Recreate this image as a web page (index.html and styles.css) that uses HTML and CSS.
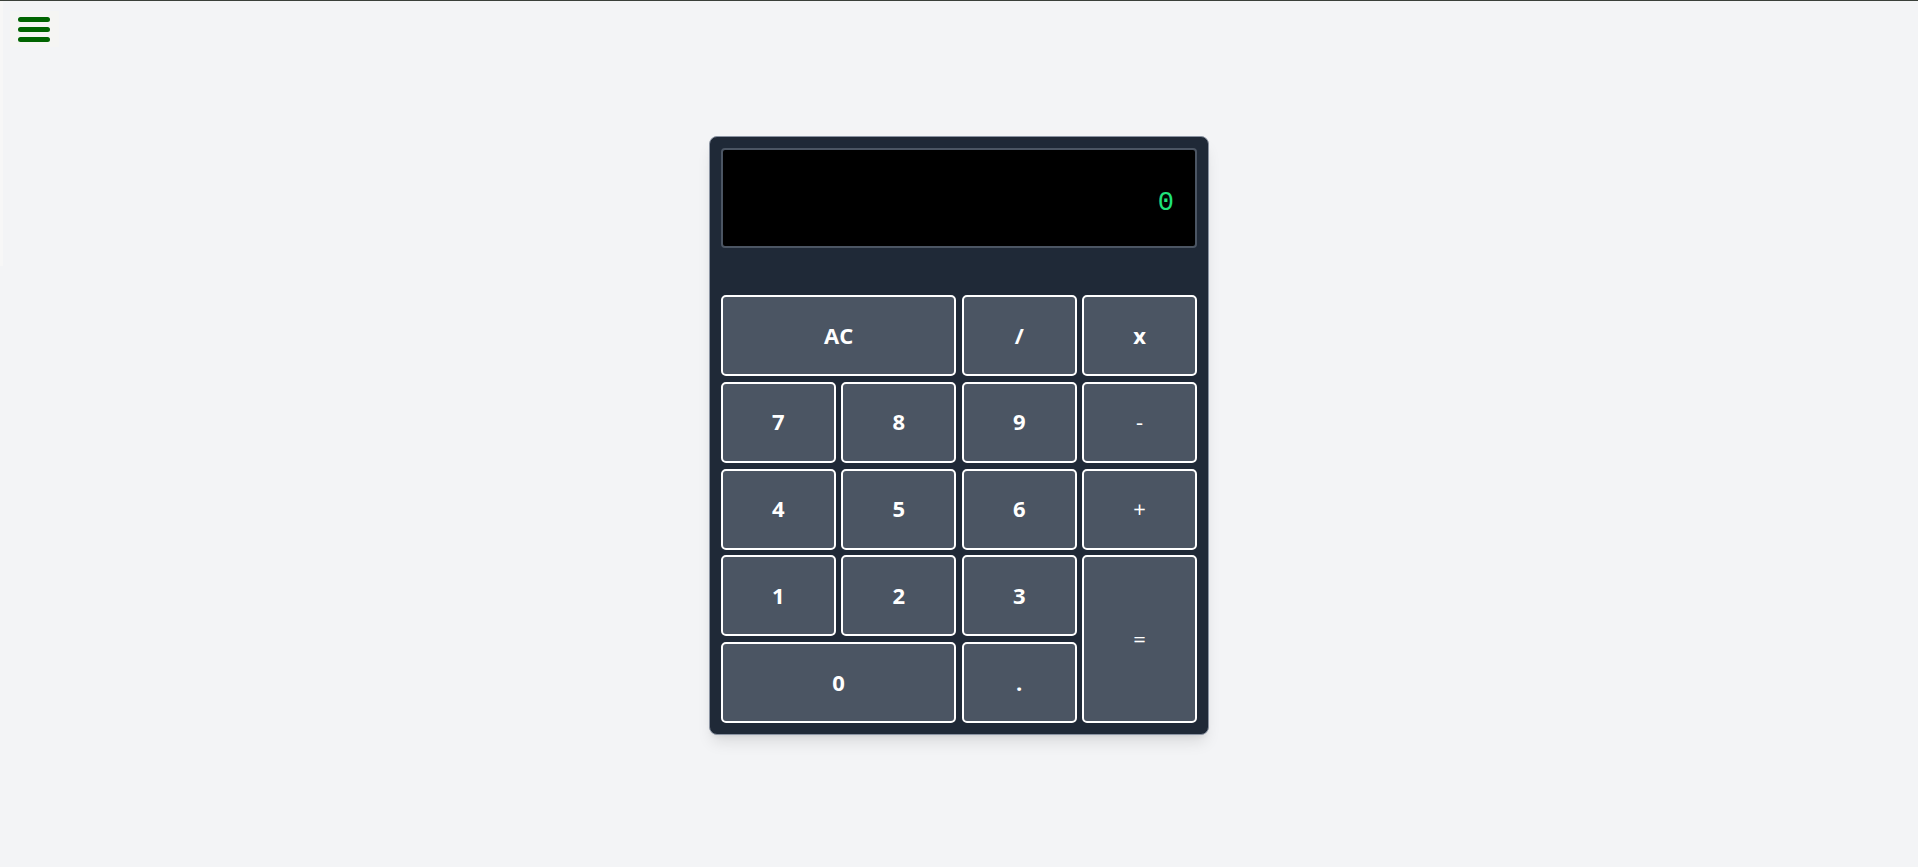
FILE: index.html
```html
<!DOCTYPE html>
<html lang="en">
<head>
<meta charset="utf-8">
<title>Calculator</title>
<link rel="stylesheet" href="styles.css">
</head>
<body>
<aside class="sidebar-edge"></aside>
<header class="topbar">
  <button class="menu-btn" aria-label="Menu">
    <svg width="32" height="25" viewBox="0 0 32 25">
      <rect x="0" y="0" width="32" height="5" rx="2.5" fill="#006400"/>
      <rect x="0" y="10" width="32" height="5" rx="2.5" fill="#006400"/>
      <rect x="0" y="20" width="32" height="5" rx="2.5" fill="#006400"/>
    </svg>
  </button>
</header>
<main class="stage">
  <div class="calculator">
    <div class="display"><span class="display-value">0</span></div>
    <div class="keys">
      <button class="key span-2">AC</button>
      <button class="key">/</button>
      <button class="key">x</button>
      <button class="key">7</button>
      <button class="key">8</button>
      <button class="key">9</button>
      <button class="key light">-</button>
      <button class="key">4</button>
      <button class="key">5</button>
      <button class="key">6</button>
      <button class="key light">+</button>
      <button class="key">1</button>
      <button class="key">2</button>
      <button class="key">3</button>
      <button class="key light tall">=</button>
      <button class="key span-2">0</button>
      <button class="key">.</button>
    </div>
  </div>
</main>
</body>
</html>
```

FILE: styles.css
```css
* { box-sizing: border-box; }

html, body { height: 100%; }

body {
  margin: 0;
  background: #f3f4f6;
  border-top: 1px solid #3a403a;
  font-family: "Open Sans", "Noto Sans", sans-serif;
}

.sidebar-edge {
  position: fixed;
  left: 0;
  top: 1px;
  width: 3px;
  height: 265px;
  background: #f7f7f7;
}

.topbar {
  padding: 10px 10px 0;
}

.menu-btn {
  display: block;
  padding: 6px 9px 5px 8px;
  border: 0;
  background: #f5f5f3;
  line-height: 0;
  cursor: pointer;
}

.stage {
  display: flex;
  justify-content: center;
  padding-top: 89px;
}

.calculator {
  width: 500px;
  background: #1f2937;
  border: 1px solid #8a93a2;
  border-radius: 8px;
  padding: 11px;
  box-shadow: 0 10px 15px -3px rgba(0,0,0,0.1), 0 4px 6px -4px rgba(0,0,0,0.1);
}

.display {
  height: 100px;
  background: #000;
  border: 2px solid #4b5563;
  border-radius: 4px;
  margin-bottom: 47px;
  display: flex;
  align-items: center;
  justify-content: flex-end;
  padding: 10px 21px 0 0;
}

.display-value {
  font-family: "Liberation Mono", "DejaVu Sans Mono", monospace;
  font-size: 27px;
  color: #1fe27a;
}

.keys {
  display: grid;
  grid-template-columns: repeat(4, 1fr);
  grid-auto-rows: 81px;
  gap: 5.75px;
}

.key {
  background: #4b5563;
  border: 2px solid #ffffff;
  border-radius: 5px;
  color: #ffffff;
  font-family: "Open Sans", "Noto Sans", sans-serif;
  font-size: 22px;
  font-weight: 700;
  padding: 0 0 2px;
  cursor: pointer;
}

.key.light { font-weight: 400; }

.span-2 { grid-column: span 2; }

.tall { grid-row: span 2; }
```
